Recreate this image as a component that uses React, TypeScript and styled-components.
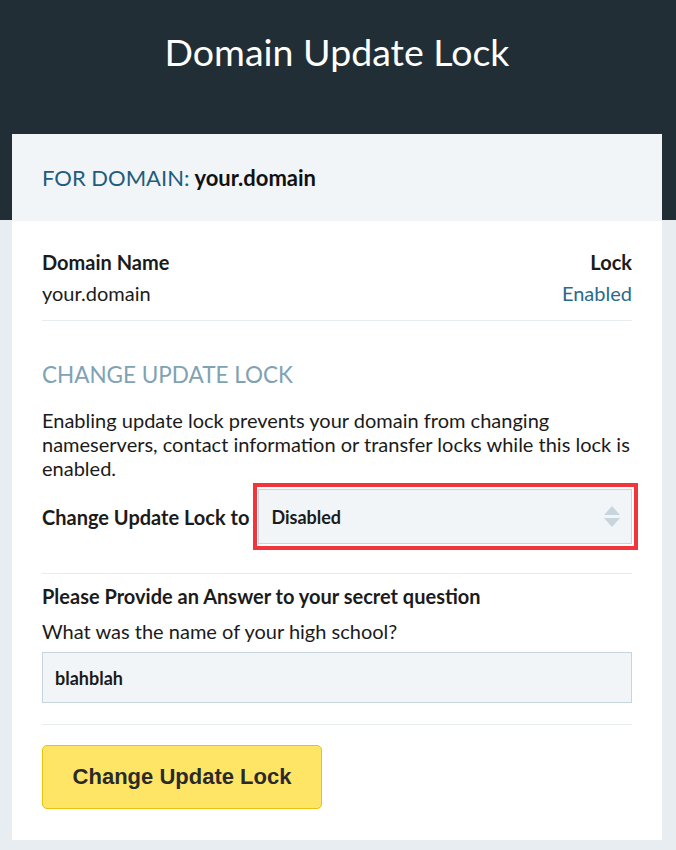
import React from "react";
import styled, { createGlobalStyle } from "styled-components";

const Global = createGlobalStyle`
  html, body { margin: 0; padding: 0; background: #e8edf1; }
  body { font-family: Lato, "Open Sans", sans-serif; color: #1b1b1b; }
  * { box-sizing: border-box; }
`;

const Page = styled.div`
  min-height: 850px;
  background: linear-gradient(#222e36 0, #222e36 220px, #e8edf1 220px);
  padding: 0 14px 11px 12px;
`;

const Title = styled.h1`
  margin: 0;
  height: 134px;
  padding-top: 28px;
  text-align: center;
  color: #ffffff;
  font-size: 37.5px;
  font-weight: 400;
  line-height: 48px;
`;

const Card = styled.div`
  background: #ffffff;
  width: 650px;
`;

const CardHeader = styled.div`
  background: #f2f5f8;
  height: 87px;
  padding: 0 30px;
  display: flex;
  align-items: center;
  font-size: 22px;
`;

const HeaderLabel = styled.span`
  color: #1f5d7e;
  text-transform: uppercase;
  margin-right: 5px;
`;

const HeaderValue = styled.span`
  color: #111;
  font-weight: 700;
`;

const Body = styled.div`
  padding: 29px 30px 31px;
`;

const InfoRow = styled.div`
  display: flex;
  justify-content: space-between;
  padding-bottom: 15px;
  border-bottom: 1px solid #e6ebee;
`;

const InfoCol = styled.div<{ $right?: boolean }>`
  display: flex;
  flex-direction: column;
  align-items: ${(p) => (p.$right ? "flex-end" : "flex-start")};
  gap: 7px;
`;

const InfoLabel = styled.div`
  font-size: 20px;
  font-weight: 700;
  line-height: 24px;
`;

const InfoValue = styled.div<{ $accent?: boolean }>`
  font-size: 20px;
  line-height: 24px;
  color: ${(p) => (p.$accent ? "#2a6a8b" : "#1b1b1b")};
`;

const SectionTitle = styled.h2`
  margin: 40px 0 0;
  font-size: 22.5px;
  font-weight: 400;
  color: #7fa2b4;
  line-height: 28px;
`;

const Paragraph = styled.p`
  margin: 19px 0 0;
  font-size: 20px;
  line-height: 24px;
`;

const SelectRow = styled.div`
  display: flex;
  align-items: center;
  margin-top: 3px;
  padding-bottom: 23px;
  border-bottom: 1px solid #e6ebee;
`;

const SelectLabel = styled.label`
  font-size: 20px;
  font-weight: 700;
  margin-right: 4px;
  white-space: nowrap;
`;

const Highlight = styled.div`
  flex: 1;
  border: 4px solid #f2353a;
  padding: 2px 2px 2px 1px;
  margin-right: -6px;
`;

const SelectBox = styled.div`
  height: 55px;
  background: #f2f5f8;
  border: 1px solid #c6d5dd;
  display: flex;
  align-items: center;
  justify-content: space-between;
  padding: 0 10px 0 12px;
  font-size: 18px;
  font-weight: 700;
`;

const Question = styled.div`
  margin-top: 10px;
  font-size: 20px;
  font-weight: 700;
  line-height: 24px;
`;

const Hint = styled.div`
  margin-top: 11px;
  font-size: 20px;
  line-height: 24px;
`;

const Input = styled.div`
  margin-top: 9px;
  height: 51px;
  background: #f2f5f8;
  border: 1px solid #c6d5dd;
  display: flex;
  align-items: center;
  padding: 0 12px;
  font-size: 18px;
  font-weight: 700;
`;

const Divider = styled.div`
  margin-top: 21px;
  border-top: 1px solid #e6ebee;
`;

const Button = styled.button`
  display: block;
  margin-top: 20px;
  width: 280px;
  height: 64px;
  background: #fee566;
  border: 1px solid #e8c40a;
  border-radius: 5px;
  font-family: "Liberation Sans", Arial, sans-serif;
  font-size: 22px;
  font-weight: 700;
  color: #2a2a2a;
  cursor: pointer;
`;

const Arrows = () => (
  <svg width="18" height="23" viewBox="0 0 18 23">
    <path d="M9 1 L17 10 H1 Z" fill="#c9d5dc" />
    <path d="M9 22 L17 13 H1 Z" fill="#c9d5dc" />
  </svg>
);

export default function App() {
  return (
    <>
      <Global />
      <Page>
        <Title>Domain Update Lock</Title>
        <Card>
          <CardHeader>
            <HeaderLabel>For Domain:</HeaderLabel>
            <HeaderValue>your.domain</HeaderValue>
          </CardHeader>
          <Body>
            <InfoRow>
              <InfoCol>
                <InfoLabel>Domain Name</InfoLabel>
                <InfoValue>your.domain</InfoValue>
              </InfoCol>
              <InfoCol $right>
                <InfoLabel>Lock</InfoLabel>
                <InfoValue $accent>Enabled</InfoValue>
              </InfoCol>
            </InfoRow>
            <SectionTitle>CHANGE UPDATE LOCK</SectionTitle>
            <Paragraph>
              Enabling update lock prevents your domain from changing nameservers, contact
              information or transfer locks while this lock is enabled.
            </Paragraph>
            <SelectRow>
              <SelectLabel>Change Update Lock to</SelectLabel>
              <Highlight>
                <SelectBox>
                  <span>Disabled</span>
                  <Arrows />
                </SelectBox>
              </Highlight>
            </SelectRow>
            <Question>Please Provide an Answer to your secret question</Question>
            <Hint>What was the name of your high school?</Hint>
            <Input>blahblah</Input>
            <Divider />
            <Button>Change Update Lock</Button>
          </Body>
        </Card>
      </Page>
    </>
  );
}
